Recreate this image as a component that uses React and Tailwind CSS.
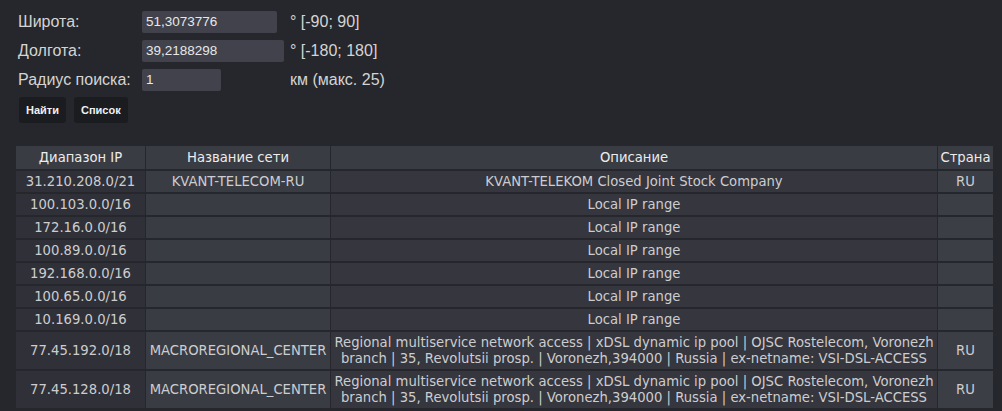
import React from 'react';

const rows = [
  { ip: '31.210.208.0/21', name: 'KVANT-TELECOM-RU', desc: 'KVANT-TELEKOM Closed Joint Stock Company', country: 'RU' },
  { ip: '100.103.0.0/16', name: '', desc: 'Local IP range', country: '' },
  { ip: '172.16.0.0/16', name: '', desc: 'Local IP range', country: '' },
  { ip: '100.89.0.0/16', name: '', desc: 'Local IP range', country: '' },
  { ip: '192.168.0.0/16', name: '', desc: 'Local IP range', country: '' },
  { ip: '100.65.0.0/16', name: '', desc: 'Local IP range', country: '' },
  { ip: '10.169.0.0/16', name: '', desc: 'Local IP range', country: '' },
  {
    ip: '77.45.192.0/18',
    name: 'MACROREGIONAL_CENTER',
    desc: 'Regional multiservice network access | xDSL dynamic ip pool | OJSC Rostelecom, Voronezh branch | 35, Revolutsii prosp. | Voronezh,394000 | Russia | ex-netname: VSI-DSL-ACCESS',
    country: 'RU',
  },
  {
    ip: '77.45.128.0/18',
    name: 'MACROREGIONAL_CENTER',
    desc: 'Regional multiservice network access | xDSL dynamic ip pool | OJSC Rostelecom, Voronezh branch | 35, Revolutsii prosp. | Voronezh,394000 | Russia | ex-netname: VSI-DSL-ACCESS',
    country: 'RU',
  },
];

export default function App() {
  return (
    <div className="min-h-[411px] w-[1002px] bg-[#26272c] pt-[11px] overflow-hidden" style={{ fontFamily: '"Liberation Sans", Arial, sans-serif' }}>
      {/* Search form */}
      <div className="grid grid-cols-[124px_auto_auto] items-center gap-y-[7px] pl-[18px] text-[16px] leading-[22px] text-[#d4d4d4] w-fit">
        <span>Широта:</span>
        <input readOnly value="51,3073776" className="w-[135px] h-[22px] rounded-[2px] bg-[#41424b] px-[4px] text-[13.5px] text-[#e8e8e8] outline-none" />
        <span className="pl-[6px]">° [-90; 90]</span>

        <span>Долгота:</span>
        <input readOnly value="39,2188298" className="w-[142px] h-[22px] rounded-[2px] bg-[#41424b] px-[4px] text-[13.5px] text-[#e8e8e8] outline-none" />
        <span className="pl-[6px]">° [-180; 180]</span>

        <span>Радиус поиска:</span>
        <input readOnly value="1" className="w-[79px] h-[22px] rounded-[2px] bg-[#41424b] px-[4px] text-[13.5px] text-[#e8e8e8] outline-none" />
        <span className="pl-[6px]">км (макс. 25)</span>
      </div>

      <div className="flex gap-[8px] pl-[19px] mt-[6px]">
        <button className="h-[26px] px-[7px] rounded-[3px] bg-[#1b1c20] text-[11px] font-bold text-[#f0f0f0]">Найти</button>
        <button className="h-[26px] px-[7px] rounded-[3px] bg-[#1b1c20] text-[11px] font-bold text-[#f0f0f0]">Список</button>
      </div>

      {/* Results */}
      <table
        className="mt-[21px] ml-[15px] w-[979px] border-separate border-spacing-x-[1px] border-spacing-y-[2px] text-[13.2px] leading-[16px] text-[#cdcdd0] text-center"
        style={{ fontFamily: '"DejaVu Sans", Verdana, sans-serif' }}
      >
        <thead>
          <tr className="text-[#ececec]">
            <th className="w-[129px] font-normal bg-[#3a3c44] pt-[4px] pb-[3px] px-[2px]">Диапазон IP</th>
            <th className="w-[184px] font-normal bg-[#3a3c44] pt-[4px] pb-[3px] px-[2px]">Название сети</th>
            <th className="font-normal bg-[#3a3c44] pt-[4px] pb-[3px] px-[1px]">Описание</th>
            <th className="w-[55px] font-normal bg-[#3a3c44] pt-[4px] pb-[3px] px-[2px]">Страна</th>
          </tr>
        </thead>
        <tbody>
          {rows.map((r) => (
            <tr key={r.ip}>
              <td className="bg-[#303138] pt-[3px] pb-[2px] px-[2px] whitespace-nowrap">{r.ip}</td>
              <td className="bg-[#3a3c44] pt-[3px] pb-[2px] px-[2px] whitespace-nowrap">{r.name}</td>
              <td className="bg-[#35363e] pt-[3px] pb-[2px] px-[1px]">{r.desc}</td>
              <td className="bg-[#3c3e46] pt-[3px] pb-[2px] px-[2px]">{r.country}</td>
            </tr>
          ))}
        </tbody>
      </table>
    </div>
  );
}
